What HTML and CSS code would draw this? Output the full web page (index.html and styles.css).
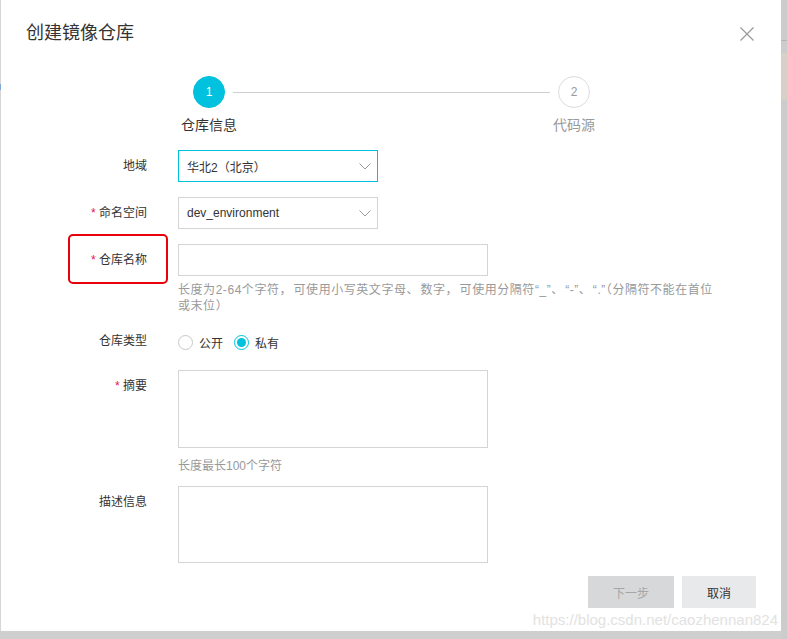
FILE: index.html
```html
<!DOCTYPE html>
<html lang="zh-CN">
<head>
<meta charset="utf-8">
<title>创建镜像仓库</title>
<link rel="stylesheet" href="styles.css">
</head>
<body>
<div class="page">
  <div class="edge-left"><div class="edge-left-mark"></div></div>
  <div class="modal">
    <div class="header">
      <h2 class="title">创建镜像仓库</h2>
      <button class="close" aria-label="关闭">
        <svg width="14" height="14" viewBox="0 0 14 14"><path d="M0.5 0.5 L13.5 13.5 M13.5 0.5 L0.5 13.5" stroke="#999" stroke-width="1.2" fill="none"/></svg>
      </button>
    </div>

    <div class="steps">
      <div class="steps-track">
        <span class="step-dot active">1</span>
        <span class="step-line"></span>
        <span class="step-dot">2</span>
      </div>
      <div class="steps-labels">
        <span class="step-label active">仓库信息</span>
        <span class="step-label">代码源</span>
      </div>
    </div>

    <div class="form">
      <div class="row row-region">
        <div class="label">地域</div>
        <div class="control">
          <div class="select focused"><span>华北2（北京）</span>
            <svg class="chev" width="12" height="7" viewBox="0 0 12 7"><polyline points="0.5,0.5 6,6 11.5,0.5" fill="none" stroke="#999" stroke-width="1"/></svg>
          </div>
        </div>
      </div>
      <div class="row row-ns">
        <div class="label"><span class="req">*</span> 命名空间</div>
        <div class="control">
          <div class="select"><span>dev_environment</span>
            <svg class="chev" width="12" height="7" viewBox="0 0 12 7"><polyline points="0.5,0.5 6,6 11.5,0.5" fill="none" stroke="#999" stroke-width="1"/></svg>
          </div>
        </div>
      </div>
      <div class="row row-name">
        <div class="label"><span class="req">*</span> 仓库名称</div>
        <div class="control">
          <div class="input"></div>
          <p class="hint hint-name"><span class="nowrap">长度为2-64个字符<span class="punct">，</span>可使用小写英文字母<span class="punct">、</span>数字<span class="punct">，</span>可使用分隔符“_”<span class="punct">、</span>“-”<span class="punct">、</span>“.”（分隔符不能在首位</span><br>或末位）</p>
        </div>
      </div>
      <div class="row row-type">
        <div class="label">仓库类型</div>
        <div class="control radios">
          <span class="radio"></span><span class="radio-text">公开</span>
          <span class="radio checked"></span><span class="radio-text">私有</span>
        </div>
      </div>
      <div class="row row-summary">
        <div class="label"><span class="req">*</span> 摘要</div>
        <div class="control">
          <div class="textarea ta-summary"></div>
          <p class="hint hint-summary">长度最长100个字符</p>
        </div>
      </div>
      <div class="row row-desc">
        <div class="label">描述信息</div>
        <div class="control">
          <div class="textarea ta-desc"></div>
        </div>
      </div>
    </div>

    <div class="footer">
      <button class="btn btn-disabled">下一步</button>
      <button class="btn btn-cancel">取消</button>
    </div>

    <div class="annotation"></div>
    <div class="watermark">https://blog.csdn.net/caozhennan824</div>
  </div>
  <div class="edge-right">
    <div class="edge-right-line"></div>
    <div class="edge-right-block"></div>
  </div>
</div>
</body>
</html>
```

FILE: styles.css
```css
* { box-sizing: border-box; }

html, body {
  margin: 0;
  padding: 0;
}

body {
  background: #cfcfcf;
  font-family: "Liberation Sans", "Noto Sans CJK SC", sans-serif;
  color: #333;
  width: 787px;
  height: 639px;
  overflow: hidden;
}

.page {
  display: flex;
  height: 639px;
}

.edge-left {
  width: 1px;
  height: 631px;
  background: #d6d6d6;
}

.edge-left-mark {
  margin-top: 84px;
  height: 6px;
  background: #7fa8d8;
}

.edge-right {
  width: 6px;
  background: #cccccc;
}

.edge-right-line {
  margin-top: 40px;
  height: 1px;
  background: #b4b4b4;
}

.edge-right-block {
  margin-top: 12px;
  height: 47px;
  background: #d8d0c6;
}

.modal {
  position: relative;
  width: 780px;
  height: 631px;
  background: #fff;
}

/* header */
.header {
  display: flex;
  justify-content: space-between;
  align-items: flex-start;
  padding: 21px 27px 0 25px;
}

.title {
  margin: 0;
  font-size: 18px;
  line-height: 24px;
  font-weight: normal;
  color: #333;
}

.close {
  margin-top: 6px;
  padding: 0;
  border: 0;
  background: none;
  width: 14px;
  height: 14px;
  display: block;
}

.close svg { display: block; }

/* steps */
.steps {
  margin-top: 31px;
}

.steps-track {
  display: flex;
  align-items: center;
  margin-left: 192px;
}

.step-dot {
  width: 32px;
  height: 32px;
  border-radius: 50%;
  border: 1px solid #dcdcdc;
  color: #999;
  background: #fff;
  font-size: 12px;
  display: flex;
  align-items: center;
  justify-content: center;
}

.step-dot.active {
  background: #00c1de;
  border-color: #00c1de;
  color: #fff;
}

.step-line {
  width: 317px;
  height: 1px;
  margin: 0 8px;
  background: #cfcfcf;
}

.steps-labels {
  display: flex;
  justify-content: space-between;
  margin-left: 168px;
  width: 445px;
  margin-top: 7px;
}

.step-label {
  width: 80px;
  text-align: center;
  font-size: 14px;
  line-height: 20px;
  color: #999;
}

.step-label.active { color: #333; }

/* form */
.form {
  margin-top: 15px;
}

.row {
  display: grid;
  grid-template-columns: 146px 1fr;
  column-gap: 31px;
  align-items: start;
}

.row-ns { margin-top: 15px; }
.row-name { margin-top: 15px; }
.row-type { margin-top: 11px; }
.row-summary { margin-top: 13px; }
.row-desc { margin-top: 12px; }

.label {
  text-align: right;
  font-size: 12px;
  line-height: 32px;
  color: #333;
}

.req {
  color: #e8105a;
}

.select {
  width: 200px;
  height: 32px;
  border: 1px solid #d4d4d4;
  display: flex;
  align-items: center;
  justify-content: space-between;
  padding: 0 6px 0 8px;
  font-size: 12px;
  color: #333;
}

.select.focused {
  border-color: #00c1de;
}

.chev { display: block; }

.input {
  width: 310px;
  height: 32px;
  border: 1px solid #d4d4d4;
}

.hint {
  margin: 6px 0 0;
  width: 580px;
  font-size: 12px;
  line-height: 16px;
  color: #999;
}

.hint-name {
  letter-spacing: 0.55px;
}

.punct {
  display: inline-block;
  width: 12px;
  margin-right: 2px;
}

.nowrap { white-space: nowrap; }

.hint-summary { margin-top: 10px; }

.radios {
  display: flex;
  align-items: center;
  height: 32px;
  padding-top: 2px;
}

.radio {
  width: 15px;
  height: 15px;
  border-radius: 50%;
  border: 1px solid #c8c8c8;
  background: #fff;
  display: flex;
  align-items: center;
  justify-content: center;
}

.radio.checked {
  border-color: #00c1de;
}

.radio.checked::after {
  content: "";
  width: 9px;
  height: 9px;
  border-radius: 50%;
  background: #00c1de;
}

.radio-text {
  font-size: 12px;
  color: #333;
  margin-left: 6px;
  margin-right: 11px;
}

.textarea {
  width: 310px;
  border: 1px solid #d4d4d4;
}

.ta-summary { height: 78px; }
.ta-desc { height: 77px; }

/* footer */
.footer {
  display: flex;
  justify-content: flex-end;
  gap: 8px;
  padding-right: 25px;
  margin-top: 13px;
}

.btn {
  height: 32px;
  border: 0;
  font-family: "Liberation Sans", "Noto Sans CJK SC", sans-serif;
  font-size: 12px;
  padding: 0;
}

.btn-disabled {
  width: 86px;
  background: #d7d8d9;
  color: #a6a6a6;
}

.btn-cancel {
  width: 74px;
  background: #e8e9ea;
  color: #333;
}

/* overlays */
.annotation {
  position: absolute;
  left: 67px;
  top: 234px;
  width: 100px;
  height: 50px;
  border: 2px solid #e8000b;
  border-radius: 5px;
}

.watermark {
  position: absolute;
  right: 3px;
  top: 611px;
  font-size: 15px;
  line-height: 18px;
  color: #e2e2e2;
  white-space: nowrap;
}
```
